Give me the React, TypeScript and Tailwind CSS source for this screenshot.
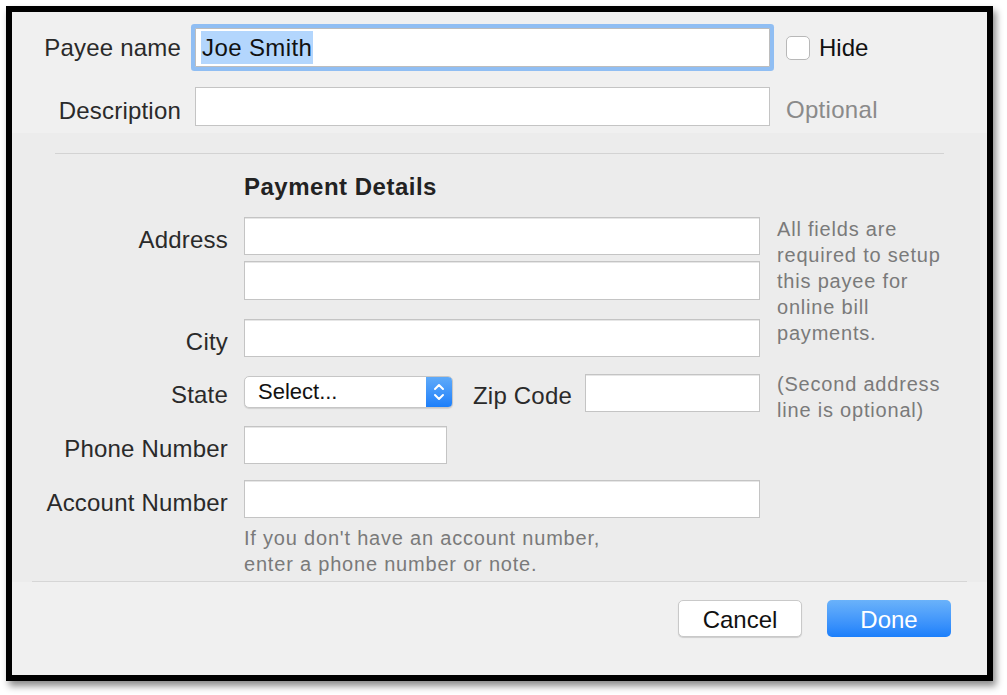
import React from "react";

function Field({ w, h = 38 }: { w: string; h?: number }) {
  return (
    <div
      className={`${w} bg-white border border-[#c4c4c4] shadow-[inset_0_1px_0_#e6e6e6]`}
      style={{ height: h }}
    />
  );
}

export default function App() {
  return (
    <div className="min-h-[695px] w-[1007px] bg-white pt-[6px] pl-[6px] font-['Liberation_Sans',Arial,sans-serif]">
      <div className="w-[987px] h-[675px] border-[6px] border-black shadow-[3px_5px_7px_rgba(0,0,0,0.45)] flex flex-col bg-[#ececec]">
        {/* Top section */}
        <div className="bg-[#f0f0f0] pt-[16px] pb-[7px]">
          <div className="flex items-center h-[39px]">
            <div className="w-[169px] text-right text-[24px] text-[#2a2a2a] leading-none tracking-[0.2px]">Payee name</div>
            <div className="ml-[14px] w-[575px] h-[39px] bg-white border border-[#bdbdbd] rounded-[1px] shadow-[0_0_0_4px_#90bef3] flex items-center pl-[5px]">
              <span className="bg-[#b3d6fd] text-[24px] text-[#111] leading-[33px] px-[1px] tracking-[0.4px]">Joe Smith</span>
            </div>
            <div className="ml-[16px] w-[24px] h-[24px] bg-white border border-[#b8b8b8] rounded-[5px]" />
            <div className="ml-[9px] text-[24px] text-[#111] leading-none">Hide</div>
          </div>
          <div className="flex items-center h-[39px] mt-[20px]">
            <div className="w-[169px] text-right text-[24px] text-[#2a2a2a] leading-none pt-[8px] tracking-[0.2px]">Description</div>
            <div className="ml-[14px] w-[575px] h-[39px] bg-white border border-[#c4c4c4]" />
            <div className="ml-[16px] text-[24px] text-[#8a8a8a] leading-none tracking-[0.3px] pt-[6px]">Optional</div>
          </div>
        </div>

        {/* Middle section */}
        <div className="flex-1 flex flex-col">
          <div className="mt-[20px] ml-[43px] w-[889px] h-[1px] bg-[#d3d3d3]" />
          <div className="mt-[19px] ml-[232px] text-[24px] font-bold text-[#222] leading-[28px] tracking-[0.5px]">
            Payment Details
          </div>
          <div className="flex mt-[15px]">
            {/* Left column */}
            <div className="w-[748px] shrink-0 flex flex-col pt-[1px]">
              <div className="flex items-center h-[38px]">
                <div className="w-[216px] text-right text-[24px] text-[#2a2a2a] leading-none pt-[8px] tracking-[0.2px]">Address</div>
                <div className="ml-[16px]"><Field w="w-[516px]" h={38} /></div>
              </div>
              <div className="flex items-center h-[39px] mt-[6px]">
                <div className="w-[216px]" />
                <div className="ml-[16px]"><Field w="w-[516px]" h={39} /></div>
              </div>
              <div className="flex items-center h-[38px] mt-[19px]">
                <div className="w-[216px] text-right text-[24px] text-[#2a2a2a] leading-none pt-[8px] tracking-[0.2px]">City</div>
                <div className="ml-[16px]"><Field w="w-[516px]" h={38} /></div>
              </div>
              <div className="flex items-center h-[38px] mt-[17px]">
                <div className="w-[216px] text-right text-[24px] text-[#2a2a2a] leading-none pt-[4px] tracking-[0.2px]">State</div>
                <div className="ml-[16px] w-[209px] h-[32px] mt-[-2px] flex rounded-[5px] bg-white border border-[#c6c6c6] shadow-[0_1px_1px_rgba(0,0,0,0.12)] overflow-hidden">
                  <div className="flex-1 flex items-center pl-[13px] text-[22px] text-[#111] leading-none">Select...</div>
                  <div className="w-[26px] h-full bg-gradient-to-b from-[#5eaaf9] to-[#1b7ffa] flex items-center justify-center">
                    <svg width="12" height="22" viewBox="0 0 12 22" fill="none" stroke="white" strokeWidth="2" strokeLinecap="round" strokeLinejoin="round">
                      <path d="M2 8 L6 4 L10 8" />
                      <path d="M2 14 L6 18 L10 14" />
                    </svg>
                  </div>
                </div>
                <div className="ml-[20px] text-[24px] text-[#2a2a2a] leading-none pt-[6px] tracking-[0.2px]">Zip Code</div>
                <div className="ml-auto"><Field w="w-[175px]" h={38} /></div>
              </div>
              <div className="flex items-center h-[38px] mt-[14px]">
                <div className="w-[216px] text-right text-[24px] text-[#2a2a2a] leading-none pt-[8px] tracking-[0.2px]">Phone Number</div>
                <div className="ml-[16px]"><Field w="w-[203px]" h={38} /></div>
              </div>
              <div className="flex items-center h-[38px] mt-[16px]">
                <div className="w-[216px] text-right text-[24px] text-[#2a2a2a] leading-none pt-[8px] tracking-[0.2px]">Account Number</div>
                <div className="ml-[16px]"><Field w="w-[516px]" h={38} /></div>
              </div>
              <div className="ml-[232px] mt-[7px] text-[20px] leading-[26px] tracking-[0.8px] text-[#7a7a7a]">
                If you don't have an account number,
                <br />
                enter a phone number or note.
              </div>
            </div>
            {/* Right column */}
            <div className="ml-[17px] text-[20px] leading-[26px] tracking-[0.8px] text-[#7a7a7a]">
              <div>
                All fields are
                <br />
                required to setup
                <br />
                this payee for
                <br />
                online bill
                <br />
                payments.
              </div>
              <div className="mt-[25px]">
                (Second address
                <br />
                line is optional)
              </div>
            </div>
          </div>
          <div className="mt-auto mx-[20px] h-[1px] bg-[#d6d6d6]" />
        </div>

        {/* Bottom section */}
        <div className="bg-[#f0f0f0] h-[93px] flex justify-end items-start pt-[18px] pr-[36px] gap-[25px]">
          <div className="w-[124px] h-[37px] bg-white border border-[#c9c9c9] rounded-[5px] shadow-[0_1px_1px_rgba(0,0,0,0.15)] flex items-center justify-center text-[24px] text-[#111] leading-none pt-[2px]">
            Cancel
          </div>
          <div className="w-[124px] h-[37px] rounded-[5px] bg-gradient-to-b from-[#6ab2fa] to-[#1a7ffb] flex items-center justify-center text-[24px] text-white leading-none pt-[2px]">
            Done
          </div>
        </div>
      </div>
    </div>
  );
}
